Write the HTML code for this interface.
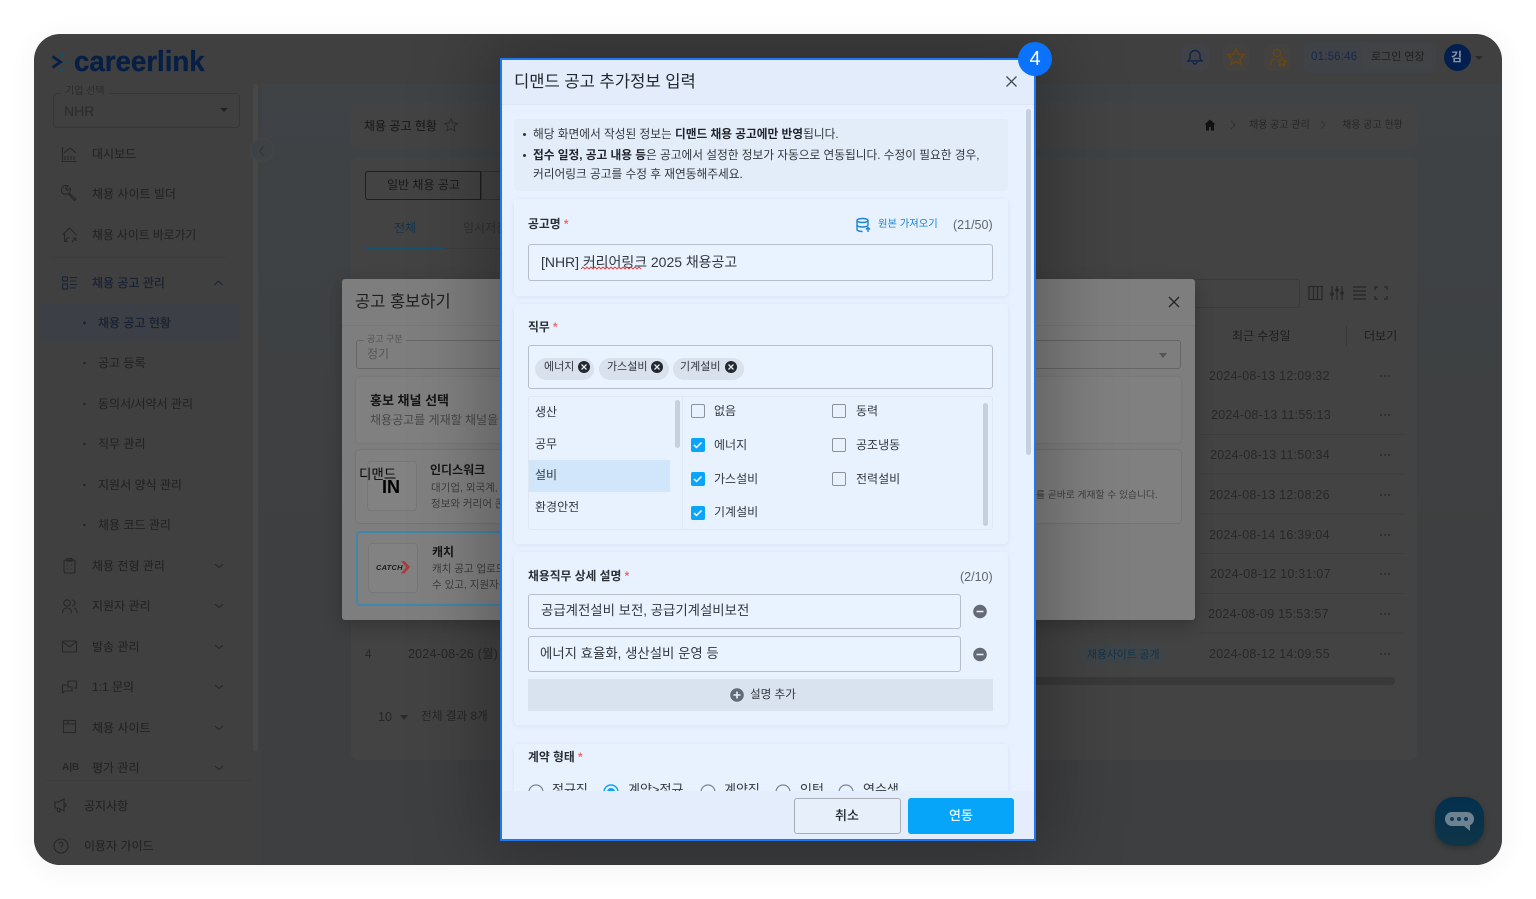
<!DOCTYPE html>
<html lang="ko"><head><meta charset="utf-8"><title>careerlink</title>
<style>
*{box-sizing:border-box}
html,body{margin:0;padding:0;width:1536px;height:899px;overflow:hidden;background:#fff;font-family:"Liberation Sans","Noto Sans CJK KR",sans-serif}
.a{position:absolute}
.t{position:absolute;white-space:nowrap;line-height:20px;height:20px;font-size:12px;color:#262626}
svg{position:absolute;overflow:visible}
#shell{left:34px;top:34px;width:1468px;height:831px;border-radius:26px;background:#404040;overflow:hidden;box-shadow:0 4px 30px rgba(0,0,0,.05)}
#root{position:absolute;left:-34px;top:-34px;width:1536px;height:899px}
.side{font-size:12px;color:#242424;margin-top:1px;-webkit-text-stroke:.12px #242424}
.st{stroke:#272727;fill:none;stroke-width:1.1}
.card{position:absolute;left:14px;width:494px;background:#e8f2ff;border-radius:4px;box-shadow:0 1px 5px rgba(90,120,170,.13)}
.inp{position:absolute;background:#e9f2ff;border:1.5px solid #b7bec8;border-radius:3px}
.lb{font-weight:700;color:#2a2f36;font-size:11.800px}
.chip{position:absolute;top:298px;height:22px;border-radius:11px;background:#d9e1ed}
.cb{position:absolute;width:14px;height:14px;border:1.5px solid #8d939b;border-radius:2px;background:#e8f2ff}
.cb.on{background:#08a5fa;border-color:#08a5fa}
.dt{font-size:12.500px;color:#282828;letter-spacing:.25px;margin-top:1px}
.mtxt{color:#33383f}
</style></head><body>
<div class="a" id="shell"><div id="root">

<!-- main bg -->
<div class="a" style="left:262px;top:84px;width:1240px;height:781px;background:linear-gradient(#3f4346,#3e3f40 60%)"></div>
<div class="a" style="left:34px;top:84px;width:228px;height:781px;background:#404040"></div>
<div class="a" style="left:253px;top:84px;width:5px;height:667px;background:#474747;border-radius:3px"></div>

<!-- logo -->
<svg style="left:0;top:0" width="80" height="80"><path d="M52.500 56.500l8 5.500-8 5.500" fill="none" stroke="#071f45" stroke-width="2.800"/><circle cx="62" cy="55" r="1.700" fill="#14506f"/><circle cx="62" cy="70" r="1.700" fill="#14506f"/><rect x="65.500" y="61" width="3.200" height="2.200" fill="#14506f"/></svg>
<div class="t" style="left:74px;top:47px;height:30px;line-height:30px;font-size:28.500px;font-weight:700;color:#071f45;transform:scaleX(.97);transform-origin:0 0;-webkit-text-stroke:.35px #071f45">careerlink</div>

<!-- top right -->
<div class="a" style="left:1182px;top:44px;width:27px;height:27px;border-radius:7px;background:#404247"></div>
<div class="a" style="left:1223px;top:44px;width:26px;height:27px;border-radius:7px;background:#444240"></div>
<div class="a" style="left:1264px;top:44px;width:27px;height:27px;border-radius:7px;background:#444240"></div>
<svg style="left:1187px;top:49px" width="17" height="17"><path d="M8 1.500a5 5 0 0 0-5 5v3l-2 2.500h14l-2-2.500v-3a5 5 0 0 0-5-5zM6 13a2 2 0 0 0 4 0" fill="none" stroke="#0f2449" stroke-width="1.400"/></svg>
<svg style="left:1227px;top:48px" width="18" height="18"><path d="M9 1l2.400 5.200 5.600.7-4.100 3.800 1.100 5.500L9 13.400 4 16.200l1.100-5.500L1 6.900l5.600-.7z" fill="none" stroke="#6a470f" stroke-width="1.500"/></svg>
<svg style="left:1269px;top:48px" width="19" height="20"><circle cx="8" cy="5" r="3.500" fill="none" stroke="#6a470f" stroke-width="1.300"/><path d="M1.500 17c0-4 2-6 5-6" fill="none" stroke="#6a470f" stroke-width="1.300"/><path d="M13 10l1.300 2.600 2.800.4-2 2 .5 2.800-2.600-1.300-2.600 1.300.5-2.800-2-2 2.800-.4z" fill="none" stroke="#6a470f" stroke-width="1.200"/></svg>
<div class="a" style="left:1304px;top:42px;width:132px;height:31px;border-radius:7px;background:#3f4247"></div>
<div class="t" style="left:1311px;top:47px;font-size:11.500px;color:#15294d;font-weight:500;letter-spacing:.2px">01:56:46</div>
<div class="a" style="left:1362px;top:45px;width:70px;height:25px;border-radius:5px;background:#424345"></div>
<div class="t" style="left:1371px;top:47px;font-size:11px;color:#1e1e1e">로그인 연장</div>
<div class="a" style="left:1444px;top:44px;width:27px;height:27px;border-radius:50%;background:#021f4f"></div>
<div class="t" style="left:1451px;top:47px;font-size:12px;font-weight:700;color:#8a97ad">김</div>
<div class="a" style="left:1475px;top:56px;border:4px solid transparent;border-top:4px solid #2a2a2a"></div>

<!-- sidebar -->
<div class="a" style="left:53px;top:93px;width:187px;height:35px;border:1px solid #363636;border-radius:4px"></div>
<div class="t" style="left:61px;top:82px;font-size:10px;background:#404040;padding:0 4px;color:#2b2b2b">기업 선택</div>
<div class="t" style="left:64px;top:101px;font-size:14px;color:#2b2b2b">NHR</div>
<div class="a" style="left:220px;top:108px;border:4px solid transparent;border-top:4px solid #222"></div>
<div class="a" style="left:250px;top:138px;width:24px;height:24px;border-radius:50%;background:#3f4245;border:1px solid #454545"></div>
<svg style="left:258px;top:145px" width="8" height="12"><path d="M6 1L1.500 6 6 11" fill="none" stroke="#363636" stroke-width="1.200"/></svg>

<div class="t side" style="left:92px;top:143px">대시보드</div>
<div class="t side" style="left:92px;top:183px">채용 사이트 빌더</div>
<div class="t side" style="left:92px;top:224px;font-size:11.800px">채용 사이트 바로가기</div>
<div class="a" style="left:52px;top:257px;width:175px;height:1px;background:#3c3c3c"></div>
<div class="t side" style="left:92px;top:272px;color:#1a2436;font-weight:500">채용 공고 관리</div>
<div class="a" style="left:40px;top:304px;width:200px;height:37px;border-radius:4px;background:#3c3f45"></div>
<div class="t side" style="left:98px;top:312px;color:#1a2436;font-weight:500">채용 공고 현황</div>
<div class="t side" style="left:98px;top:352px">공고 등록</div>
<div class="t side" style="left:98px;top:393px">동의서/서약서 관리</div>
<div class="t side" style="left:98px;top:433px">직무 관리</div>
<div class="t side" style="left:98px;top:474px">지원서 양식 관리</div>
<div class="t side" style="left:98px;top:514px">채용 코드 관리</div>
<div class="t side" style="left:92px;top:555px">채용 전형 관리</div>
<div class="t side" style="left:92px;top:595px">지원자 관리</div>
<div class="t side" style="left:92px;top:636px">발송 관리</div>
<div class="t side" style="left:92px;top:676px">1:1 문의</div>
<div class="t side" style="left:92px;top:717px">채용 사이트</div>
<div class="t side" style="left:92px;top:757px">평가 관리</div>
<div class="a" style="left:46px;top:780px;width:205px;height:1px;background:#3c3c3c"></div>
<div class="t side" style="left:84px;top:795px">공지사항</div>
<div class="t side" style="left:84px;top:835px">이용자 가이드</div>
<svg style="left:0;top:0" width="262" height="899">
<g fill="#17243f"><circle cx="84.500" cy="323" r="1.500"/></g>
<g fill="#272727"><circle cx="84.500" cy="363" r="1.300"/><circle cx="84.500" cy="404" r="1.300"/><circle cx="84.500" cy="444" r="1.300"/><circle cx="84.500" cy="485" r="1.300"/><circle cx="84.500" cy="525" r="1.300"/></g>
<g class="st">
<path d="M62.500 147v14.500h14M65 160v-4M68 160v-4M71 160v-4M74 160v-4M64 153l6-5 6 5"/>
<path d="M63 187a4 4 0 0 1 5-1l-2.500 2.500 2 2 2.500-2.500a4 4 0 0 1-1 5l7 6-1.500 1.500-6.500-7a4 4 0 0 1-5-6.500z"/>
<path d="M62.500 235l7-7 7 7M64.500 233v8.500h3M66 241.500c0-3 1.500-4 3.500-4M72 242l4-4M73 238h3v3"/>
<g stroke="#1a2436"><rect x="62.500" y="277" width="5" height="4"/><rect x="62.500" y="284" width="5" height="5"/><path d="M70 277.500h7M70 281h6M70 284.500h7M70 288h6"/></g>
<path d="M214.500 285l4-4 4 4" stroke="#1a2436"/>
<rect x="64" y="560" width="11" height="13" rx="1.500"/><rect x="67" y="558.500" width="5" height="2.500"/><path d="M67 565h1M71 565h1M67 569h1M71 569h1"/>
<circle cx="67" cy="603" r="3.200"/><path d="M62.500 613c0-3.500 2-5 4.500-5s4.500 1.500 4.500 5M72 600a3 3 0 0 1 0 6M74 608c2 .5 3 2.500 3 5"/>
<rect x="62.500" y="641" width="14" height="11" rx="1"/><path d="M63 642l6.500 5 6.500-5"/>
<path d="M68 681h8.500v7h-2.500M68 681v6h5M68 685h-5.500v8l2.500-2h7v-3"/>
<rect x="63.500" y="720.500" width="12" height="12"/><path d="M63.500 724h12M68 720.500v3.500"/>
<path d="M55 802h3l6-3v12l-6-3h-3zM64 803a2 2 0 0 1 0 4M57 808l1 4h2l-.5-3.500"/>
<circle cx="61" cy="846" r="7"/><path d="M59 844a2 2 0 1 1 3 1.800c-.8.4-1 1-1 1.700M61 849.500v.5"/>
<path d="M215 564l4 3.500 4-3.500M215 604l4 3.500 4-3.500M215 645l4 3.500 4-3.500M215 685l4 3.500 4-3.500M215 726l4 3.500 4-3.500M215 766l4 3.500 4-3.500"/>
</g></svg>
<div class="t" style="left:62px;top:758px;font-size:10px;font-weight:700;color:#272727">A|B</div>

<!-- title card -->
<div class="a" style="left:351px;top:102px;width:1066px;height:47px;border-radius:8px;background:#434343"></div>
<div class="t" style="left:364px;top:115px;margin-top:1px;font-size:12px;font-weight:500;color:#1e1e1e">채용 공고 현황</div>
<svg style="left:444px;top:118px" width="14" height="14"><path d="M7 .800l1.900 4.200 4.400.5-3.300 3 1 4.400L7 10.700l-4 2.200 1-4.400-3.300-3 4.400-.5z" fill="none" stroke="#2c2c2c"/></svg>
<svg style="left:1204px;top:119px" width="12" height="12"><path d="M6 .500L.500 5.500H2v6h3V8h2v3.500h3v-6h1.500z" fill="#111"/></svg>
<svg style="left:1230px;top:120px" width="110" height="10"><path d="M1 1l4 4-4 4M91 1l4 4-4 4" fill="none" stroke="#333"/></svg>
<div class="t" style="left:1249px;top:116px;font-size:10px;color:#262626">채용 공고 관리</div>
<div class="t" style="left:1342px;top:116px;font-size:10px;color:#262626">채용 공고 현황</div>

<!-- main card -->
<div class="a" style="left:351px;top:157px;width:1066px;height:603px;border-radius:8px;background:#434343"></div>
<div class="a" style="left:365px;top:171px;width:116px;height:29px;border:1px solid #1e1e1e;border-radius:3px 0 0 3px"></div>
<div class="a" style="left:481px;top:171px;width:30px;height:29px;border:1px solid #333"></div>
<div class="t" style="left:387px;top:175px;font-size:12px;color:#1a1a1a">일반 채용 공고</div>
<div class="t" style="left:394px;top:218px;font-size:12px;color:#123448">전체</div>
<div class="t" style="left:463px;top:218px;font-size:12px;color:#303030">임시저장</div>
<div class="a" style="left:365px;top:247px;width:80px;height:2px;background:#16506f"></div>
<div class="a" style="left:445px;top:248px;width:60px;height:1px;background:#3e3e3e"></div>

<div class="a" style="left:1100px;top:279px;width:200px;height:29px;border:1px solid #3a3a3a;border-radius:3px"></div>
<svg style="left:1306px;top:284px" width="84" height="18"><g fill="none" stroke="#272727" stroke-width="1.200"><rect x="3" y="2.500" width="13" height="13"/><path d="M7.500 2.500v13M11.500 2.500v13M26 2v14M31 2v14M36 2v14M47 3h13M47 7h13M47 11h13M47 15h13M69 6V3h3M78 3h3v3M81 12v3h-3M72 15h-3v-3"/></g><g fill="#272727"><circle cx="26" cy="10" r="1.800"/><circle cx="31" cy="6" r="1.800"/><circle cx="36" cy="9" r="1.800"/></g></svg>
<div class="t" style="left:1232px;top:326px;color:#1e1e1e;font-size:12px">최근 수정일</div>
<div class="t" style="left:1364px;top:326px;color:#1e1e1e;font-size:12px">더보기</div>
<div class="a" style="left:1346px;top:326px;width:1px;height:20px;background:#383838"></div>

<div class="t dt" style="left:1209px;top:365px">2024-08-13 12:09:32</div>
<div class="t dt" style="left:1211px;top:404px">2024-08-13 11:55:13</div>
<div class="t dt" style="left:1210px;top:444px">2024-08-13 11:50:34</div>
<div class="t dt" style="left:1209px;top:484px">2024-08-13 12:08:26</div>
<div class="t dt" style="left:1209px;top:524px">2024-08-14 16:39:04</div>
<div class="t dt" style="left:1210px;top:563px">2024-08-12 10:31:07</div>
<div class="t dt" style="left:1208px;top:603px">2024-08-09 15:53:57</div>
<div class="t dt" style="left:1209px;top:643px">2024-08-12 14:09:55</div>
<svg style="left:1380px;top:370px" width="12" height="290"><g fill="#2a2a2a"><g id="d"><circle cx="1" cy="6" r="1"/><circle cx="5" cy="6" r="1"/><circle cx="9" cy="6" r="1"/></g><use href="#d" y="39"/><use href="#d" y="79"/><use href="#d" y="119"/><use href="#d" y="159"/><use href="#d" y="198"/><use href="#d" y="238"/><use href="#d" y="278"/></g></svg>
<div class="a" style="left:1200px;top:396px;width:205px;height:238px;background:repeating-linear-gradient(#0000 0 38px,#3d3d3d 38px 39px,#0000 39px 39.700px)"></div>
<div class="t" style="left:365px;top:644px;font-size:12px">4</div>
<div class="t" style="left:408px;top:644px;font-size:12.500px;letter-spacing:.2px">2024-08-26 (월)</div>
<div class="a" style="left:1079px;top:644px;width:87px;height:21px;border-radius:11px;background:#3e4447"></div>
<div class="t" style="left:1087px;top:645px;font-size:10.800px;color:#12344a">채용사이트 공개</div>
<div class="a" style="left:1030px;top:677px;width:365px;height:8px;border-radius:4px;background:#393939"></div>
<div class="t" style="left:378px;top:707px;font-size:12.500px">10</div>
<div class="a" style="left:400px;top:715px;border:4px solid transparent;border-top:5px solid #2a2a2a"></div>
<div class="t" style="left:421px;top:707px;font-size:11.700px">전체 결과 8개</div>

<!-- chat button -->
<div class="a" style="left:1435px;top:797px;width:49px;height:49px;border-radius:19px;background:linear-gradient(#03304f,#0f3547);box-shadow:0 2px 6px rgba(0,0,0,.25)"></div>
<svg style="left:1444px;top:811px" width="31" height="21"><path d="M8 1h15a7 7 0 0 1 7 7 7 7 0 0 1-4 6.300V20l-6-5H8a7 7 0 0 1 0-14z" fill="#6d8191"/><g fill="#0e3c59"><circle cx="8" cy="8" r="2"/><circle cx="15" cy="8" r="2"/><circle cx="22" cy="8" r="2"/></g></svg>

<!-- back modal -->
<div class="a" style="left:342px;top:279px;width:853px;height:341px;border-radius:3px;background:#7e7e7e;box-shadow:0 6px 18px rgba(0,0,0,.22)"></div>
<div class="a" style="left:342px;top:325px;width:853px;height:1px;background:#777"></div>
<div class="t" style="left:355px;top:292px;font-size:16.500px;color:#1f1f1f">공고 홍보하기</div>
<svg style="left:1168px;top:296px" width="12" height="12"><path d="M1 1l10 10M11 1L1 11" stroke="#252525" stroke-width="1.300"/></svg>
<div class="a" style="left:356px;top:340px;width:825px;height:29px;border:1px solid #666;border-radius:3px"></div>
<div class="t" style="left:364px;top:329px;font-size:9px;color:#555;background:#7e7e7e;padding:0 3px">공고 구분</div>
<div class="t" style="left:367px;top:344px;font-size:12px;color:#555">정기</div>
<div class="a" style="left:1159px;top:353px;border:4px solid transparent;border-top:5px solid #555"></div>
<div class="a" style="left:356px;top:377px;width:825px;height:66px;border-radius:4px;background:#808080;box-shadow:0 0 2px rgba(0,0,0,.13)"></div>
<div class="t" style="left:370px;top:391px;font-size:13px;font-weight:700;color:#151515">홍보 채널 선택</div>
<div class="t" style="left:370px;top:410px;font-size:12px;color:#484848">채용공고를 게재할 채널을</div>
<div class="a" style="left:356px;top:450px;width:825px;height:73px;border-radius:4px;background:#808080;box-shadow:0 0 2px rgba(0,0,0,.2)"></div>
<div class="a" style="left:367px;top:461px;width:50px;height:50px;border-radius:4px;background:#828282;border:1px solid #777"></div>
<div class="t" style="left:359px;top:465px;font-size:13.500px;color:#050505">디맨드</div>
<div class="t" style="left:382px;top:477px;font-size:18px;font-weight:700;color:#000">IN</div>
<div class="t" style="left:430px;top:460px;font-size:12px;font-weight:700;color:#161616">인디스워크</div>
<div class="t" style="left:431px;top:478px;font-size:10.500px;color:#3d3d3d">대기업, 외국계, 스타트업</div>
<div class="t" style="left:431px;top:494px;font-size:10.500px;color:#3d3d3d">정보와 커리어 콘텐츠</div>
<div class="t" style="left:1036px;top:486px;font-size:9.800px;color:#3d3d3d">를 곧바로 게재할 수 있습니다.</div>
<div class="a" style="left:356px;top:531px;width:200px;height:75px;border-radius:4px;background:#808080;border:2px solid #3f87ab"></div>
<div class="a" style="left:368px;top:543px;width:50px;height:50px;border-radius:4px;background:#828282;border:1px solid #777"></div>
<div class="t" style="left:376px;top:558px;font-size:7.500px;font-weight:700;font-style:italic;color:#1b1b1b;letter-spacing:.2px">CATCH</div>
<svg style="left:401px;top:561px" width="10" height="13"><path d="M0 0h3.500l5.500 6-5.500 6.500H0L5 6z" fill="#a83e3e"/></svg>
<div class="t" style="left:432px;top:542px;font-size:12px;font-weight:700;color:#161616">캐치</div>
<div class="t" style="left:432px;top:559px;font-size:10.500px;color:#3d3d3d">캐치 공고 업로드</div>
<div class="t" style="left:432px;top:575px;font-size:10.500px;color:#3d3d3d">수 있고, 지원자는</div>

<!-- front modal -->
<div class="a" id="m" style="left:500px;top:58px;width:536px;height:783px;background:#e8f1ff;border:2px solid #2176f1;box-shadow:0 0 70px 15px rgba(0,0,0,.28);overflow:hidden"></div>
<div class="a" style="left:502px;top:60px;width:532px;height:779px;overflow:hidden" id="in">
<div class="a" style="left:0;top:0;width:532px;height:45px;background:#e2ecfa;border-bottom:1px solid #dde6f3"></div>
<div class="t mtxt" style="left:12px;top:11px;margin-top:1px;font-size:16.600px;color:#23282f">디맨드 공고 추가정보 입력</div>
<svg style="left:504px;top:16px" width="11" height="11"><path d="M.500.500l10 10M10.500.500l-10 10" stroke="#454b52" stroke-width="1.300"/></svg>
<div class="a" style="left:524px;top:49px;width:5px;height:346px;border-radius:3px;background:#c6d0dd"></div>

<div class="a" style="left:12px;top:59px;width:494px;height:72px;border-radius:4px;background:#e3ecf9"></div>
<div class="a" style="left:21px;top:73px;width:3px;height:3px;border-radius:50%;background:#333"></div>
<div class="a" style="left:21px;top:94px;width:3px;height:3px;border-radius:50%;background:#333"></div>
<div class="t mtxt" style="left:31px;top:65px;font-size:11.700px">해당 화면에서 작성된 정보는 <b style="color:#1f242a">디맨드 채용 공고에만 반영</b>됩니다.</div>
<div class="t mtxt" style="left:31px;top:86px;font-size:11.700px"><b style="color:#1f242a">접수 일정, 공고 내용 등</b>은 공고에서 설정한 정보가 자동으로 연동됩니다. 수정이 필요한 경우,</div>
<div class="t mtxt" style="left:31px;top:105px;font-size:11.700px">커리어링크 공고를 수정 후 재연동해주세요.</div>

<div class="card" style="left:12px;top:139px;height:97px"></div>
<div class="t lb" style="left:26px;top:154px">공고명 <span style="color:#ee6a6a">*</span></div>
<svg style="left:354px;top:158px" width="15" height="15"><g fill="none" stroke="#1a84d6" stroke-width="1.400"><ellipse cx="6.500" cy="2.500" rx="5.500" ry="2"/><path d="M1 2.500v9c0 1.200 2.500 2 5.500 2M12 2.500V7M1 7c0 1.200 2.500 2 5.500 2s5.500-.8 5.500-2M12 14v-4M10 11.500l2-2 2 2"/></g></svg>
<div class="t" style="left:376px;top:155px;font-size:10.300px;color:#1c84d4">원본 가져오기</div>
<div class="t" style="left:451px;top:155px;font-size:12.500px;color:#5f666e">(21/50)</div>
<div class="inp" style="left:26px;top:184px;width:465px;height:37px"></div>
<div class="t mtxt" style="left:39px;top:192px;font-size:14px;letter-spacing:-.03px">[NHR] 커리어링크 2025 채용공고</div>
<svg style="left:79px;top:207px" width="65" height="4"><path d="M0 2l2-2 2 2 2-2 2 2 2-2 2 2 2-2 2 2 2-2 2 2 2-2 2 2 2-2 2 2 2-2 2 2 2-2 2 2 2-2 2 2 2-2 2 2 2-2 2 2 2-2 2 2 2-2 2 2 2-2 2 2" fill="none" stroke="#e23b3b" stroke-width=".9"/></svg>

<div class="card" style="left:12px;top:244px;height:240px"></div>
<div class="t lb" style="left:26px;top:257px">직무 <span style="color:#ee6a6a">*</span></div>
<div class="inp" style="left:26px;top:285px;width:465px;height:44px"></div>
<div class="chip" style="left:33px;width:59px"></div>
<div class="chip" style="left:97px;width:70px"></div>
<div class="chip" style="left:171px;width:71px"></div>
<div class="t mtxt" style="left:42px;top:297px;font-size:11px">에너지</div>
<div class="t mtxt" style="left:105px;top:297px;font-size:11px">가스설비</div>
<div class="t mtxt" style="left:178px;top:297px;font-size:11px">기계설비</div>
<svg style="left:0;top:0" width="300" height="320"><g id="x"><circle cx="82" cy="307" r="6" fill="#23272e"/><path d="M79.500 304.500l5 5M84.500 304.500l-5 5" stroke="#e2e8f2" stroke-width="1.300"/></g><use href="#x" x="73"/><use href="#x" x="147"/></svg>

<div class="a" style="left:26px;top:336px;width:465px;height:134px;border:1px solid #dfe7f3;border-radius:3px"></div>
<div class="a" style="left:180px;top:337px;width:1px;height:132px;background:#dfe7f3"></div>
<div class="a" style="left:27px;top:400px;width:141px;height:32px;background:#d1e6fb"></div>
<div class="a" style="left:173px;top:340px;width:5px;height:48px;border-radius:3px;background:#c6d0dd"></div>
<div class="a" style="left:481px;top:343px;width:5px;height:123px;border-radius:3px;background:#c6d0dd"></div>
<div class="t mtxt" style="left:33px;top:342px">생산</div>
<div class="t mtxt" style="left:33px;top:374px">공무</div>
<div class="t mtxt" style="left:33px;top:405px">설비</div>
<div class="t mtxt" style="left:33px;top:437px">환경안전</div>

<div class="cb" style="left:188.500px;top:344px"></div>
<div class="cb on" style="left:188.500px;top:378px"></div>
<div class="cb on" style="left:188.500px;top:412px"></div>
<div class="cb on" style="left:188.500px;top:446px"></div>
<div class="cb" style="left:329.500px;top:344px"></div>
<div class="cb" style="left:329.500px;top:378px"></div>
<div class="cb" style="left:329.500px;top:412px"></div>
<svg style="left:0;top:0" width="210" height="470"><g fill="none" stroke="#fff" stroke-width="1.500"><path d="M192 385l2.500 2.500 5-5M192 419l2.500 2.500 5-5M192 453l2.500 2.500 5-5"/></g></svg>
<div class="t mtxt" style="left:212px;top:341px">없음</div>
<div class="t mtxt" style="left:212px;top:375px">에너지</div>
<div class="t mtxt" style="left:212px;top:409px">가스설비</div>
<div class="t mtxt" style="left:212px;top:442px">기계설비</div>
<div class="t mtxt" style="left:354px;top:341px">동력</div>
<div class="t mtxt" style="left:354px;top:375px">공조냉동</div>
<div class="t mtxt" style="left:354px;top:409px">전력설비</div>

<div class="card" style="left:12px;top:492px;height:173px"></div>
<div class="t lb" style="left:26px;top:506px">채용직무 상세 설명 <span style="color:#ee6a6a">*</span></div>
<div class="t" style="left:458px;top:507px;font-size:12.500px;color:#5f666e">(2/10)</div>
<div class="inp" style="left:26px;top:534px;width:433px;height:35px"></div>
<div class="inp" style="left:26px;top:576px;width:433px;height:36px"></div>
<div class="t mtxt" style="left:39px;top:541px;font-size:13.400px">공급계전설비 보전, 공급기계설비보전</div>
<div class="t mtxt" style="left:38px;top:584px;font-size:13.400px">에너지 효율화, 생산설비 운영 등</div>
<svg style="left:470px;top:544px" width="17" height="60"><g fill="#646b75"><circle cx="8" cy="7.500" r="6.800"/><circle cx="8" cy="50.500" r="6.800"/></g><path d="M4.500 7.500h7M4.500 50.500h7" stroke="#e8f1ff" stroke-width="1.600"/></svg>
<div class="a" style="left:26px;top:619px;width:465px;height:32px;background:#d9e2ef"></div>
<svg style="left:228px;top:628px" width="15" height="15"><circle cx="7" cy="7" r="6.800" fill="#646b75"/><path d="M3.500 7h7M7 3.500v7" stroke="#e8f1ff" stroke-width="1.600"/></svg>
<div class="t mtxt" style="left:248px;top:624px;margin-top:1px;font-size:11.600px">설명 추가</div>

<div class="card" style="left:12px;top:684px;height:100px"></div>
<div class="t lb" style="left:26px;top:687px">계약 형태 <span style="color:#ee6a6a">*</span></div>
<svg style="left:0;top:0" width="370" height="760"><g fill="#e8f2ff" stroke="#7f858e" stroke-width="1.200"><circle cx="34" cy="732" r="7"/><circle cx="206" cy="732" r="7"/><circle cx="281" cy="732" r="7"/><circle cx="344" cy="732" r="7"/></g><circle cx="109" cy="732" r="7" fill="#e8f2ff" stroke="#0aa5f7" stroke-width="1.400"/><circle cx="109" cy="732" r="4" fill="#0aa5f7"/></svg>
<div class="t mtxt" style="left:50px;top:720px;font-size:13px">정규직</div>
<div class="t mtxt" style="left:126px;top:720px;font-size:13px">계약&gt;정규</div>
<div class="t mtxt" style="left:222px;top:720px;font-size:13px">계약직</div>
<div class="t mtxt" style="left:298px;top:720px;font-size:13px">인턴</div>
<div class="t mtxt" style="left:361px;top:720px;font-size:13px">연수생</div>

<div class="a" style="left:0;top:731px;width:532px;height:48px;background:#e3edfb"></div>
<div class="a" style="left:292px;top:738px;width:107px;height:36px;border:1.500px solid #a9aeb6;border-radius:3px;background:#e7effb"></div>
<div class="t" style="left:333px;top:746px;font-size:13px;color:#22272d;font-weight:500">취소</div>
<div class="a" style="left:406px;top:738px;width:106px;height:36px;border-radius:3px;background:#07a5f9"></div>
<div class="t" style="left:447px;top:746px;font-size:13px;color:#e6f4ff;font-weight:500">연동</div>
</div>

<!-- badge -->
<div class="a" style="left:1018px;top:42px;width:34px;height:34px;border-radius:50%;background:#0b72fb"></div>
<div class="t" style="left:1018px;top:49px;width:34px;text-align:center;font-size:20px;color:#fff;font-weight:500">4</div>

</div></div>
</body></html>
